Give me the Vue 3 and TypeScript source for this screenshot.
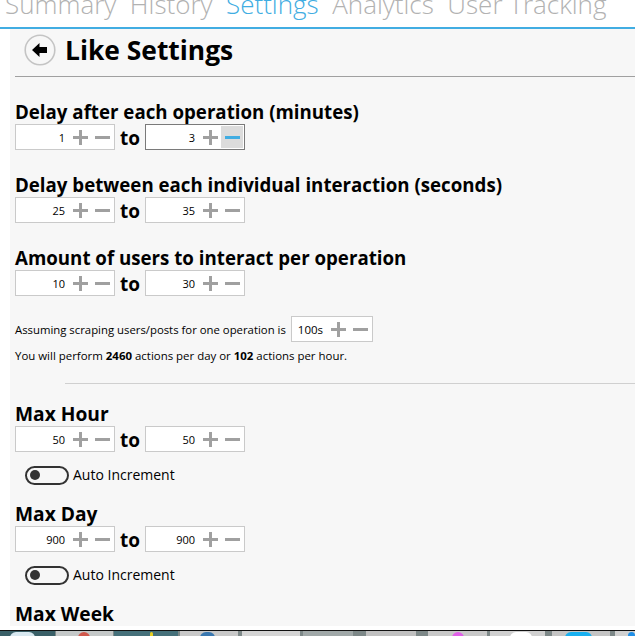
<script setup lang="ts">
interface Range {
  title: string
  from: number
  to: number
}

interface TaskButton {
  width: number
  gap: number
  color: string
  accent?: string
  left?: number
  size?: number
}

const tabs = ['Summary', 'History', 'Settings', 'Analytics', 'User Tracking']

const delays: Range[] = [
  { title: 'Delay after each operation (minutes)', from: 1, to: 3 },
  { title: 'Delay between each individual interaction (seconds)', from: 25, to: 35 },
  { title: 'Amount of users to interact per operation', from: 10, to: 30 }
]

const limits: Range[] = [
  { title: 'Max Hour', from: 50, to: 50 },
  { title: 'Max Day', from: 900, to: 900 }
]

// taskbar buttons, left to right
const taskbar: TaskButton[] = [
  { width: 55, gap: 1, color: '#3a6068', accent: '#d8e8f0', left: 10, size: 25 },
  { width: 57, gap: 1, color: '#c4c8c8', accent: '#d0584c', left: 22, size: 12 },
  { width: 64, gap: 2, color: '#45707a', accent: '#e8d020', left: 36, size: 3 },
  { width: 58, gap: 4, color: '#c8c8c8', accent: '#3a78b0', left: 20, size: 15 },
  { width: 58, gap: 3, color: '#d4d4d4' },
  { width: 50, gap: 13, color: '#a0a8a8' },
  { width: 50, gap: 12, color: '#c0c0c0' },
  { width: 59, gap: 3, color: '#c8c8c8', accent: '#e060e8', left: 24, size: 12 },
  { width: 55, gap: 7, color: '#d0d0d0', accent: '#ffffff', left: 20, size: 22 },
  { width: 58, gap: 5, color: '#c4c4c4', accent: '#18b0f0', left: 13, size: 27 },
  { width: 20, gap: 0, color: '#d0d0d0', accent: '#2090e8', left: 13, size: 7 }
]
</script>

<template>
  <div class="screen">
    <nav class="tabs">
      <span v-for="tab in tabs" :key="tab" :class="['tab', { active: tab === 'Settings' }]">{{ tab }}</span>
    </nav>

    <main class="panel">
      <header class="page-head">
        <span class="back">
          <svg width="32" height="32" viewBox="0 0 32 32">
            <circle cx="16" cy="16" r="14.8" fill="none" stroke="#c4c4c4" stroke-width="1.6" />
            <path d="M8 16 L15.5 9 V13 H23 V19 H15.5 V23 Z" fill="#000" />
          </svg>
        </span>
        <h1>Like Settings</h1>
      </header>

      <section v-for="(item, i) in delays" :key="item.title" class="block">
        <h2>{{ item.title }}</h2>
        <div class="range">
          <div class="stepper">
            <span class="value">{{ item.from }}</span>
            <span class="btn"><i /><b /></span>
            <span class="btn"><i /></span>
          </div>
          <span class="to">to</span>
          <div :class="['stepper', { focused: i === 0 }]">
            <span class="value">{{ item.to }}</span>
            <span class="btn"><i /><b /></span>
            <span :class="['btn', { hover: i === 0 }]"><i /></span>
          </div>
        </div>
      </section>

      <div class="assume">
        <span>Assuming scraping users/posts for one operation is</span>
        <div class="stepper small">
          <span class="value">100s</span>
          <span class="btn"><i /><b /></span>
          <span class="btn"><i /></span>
        </div>
      </div>
      <p class="summary">You will perform <strong>2460</strong> actions per day or <strong>102</strong> actions per hour.</p>

      <hr class="divider" />

      <section v-for="item in limits" :key="item.title" class="limit">
        <h2>{{ item.title }}</h2>
        <div class="range">
          <div class="stepper">
            <span class="value">{{ item.from }}</span>
            <span class="btn"><i /><b /></span>
            <span class="btn"><i /></span>
          </div>
          <span class="to">to</span>
          <div class="stepper">
            <span class="value">{{ item.to }}</span>
            <span class="btn"><i /><b /></span>
            <span class="btn"><i /></span>
          </div>
        </div>
        <div class="auto">
          <span class="toggle"><em /></span>
          <span>Auto Increment</span>
        </div>
      </section>

      <h2>Max Week</h2>
    </main>

    <footer class="taskbar">
      <span
        v-for="(b, i) in taskbar"
        :key="i"
        class="task"
        :style="{ width: b.width + 'px', marginRight: b.gap + 'px', background: b.color }"
      >
        <u v-if="b.accent" :style="{ left: b.left + 'px', width: b.size + 'px', background: b.accent }" />
      </span>
    </footer>
  </div>
</template>

<style>
html,
body {
  margin: 0;
  background: #fff;
  overflow: hidden;
}
</style>

<style scoped>
.screen {
  width: 635px;
  height: 636px;
  display: flex;
  flex-direction: column;
  overflow: hidden;
  font-family: "Open Sans", "Noto Sans", sans-serif;
  color: #000;
}

.tabs {
  height: 27px;
  flex: none;
  display: flex;
  align-items: flex-end;
  gap: 13.5px;
  padding-left: 5px;
  border-bottom: 2px solid #41ade2;
  overflow: hidden;
}

.tab {
  font-size: 26px;
  font-weight: 300;
  line-height: 34px;
  margin-bottom: 6px;
  color: #b2b2b2;
  white-space: nowrap;
}

.tab.active {
  color: #41ade2;
}

.panel {
  flex: 1;
  min-height: 0;
  margin: 0 0 4px 10px;
  padding: 0 0 0 5px;
  background: #f7f7f7;
  overflow: hidden;
}

.page-head {
  height: 47px;
  box-sizing: content-box;
  display: flex;
  align-items: center;
  gap: 9px;
  padding-left: 9px;
  border-bottom: 1px solid #a0a0a0;
  margin-bottom: 23px;
}

.back {
  display: flex;
  margin-bottom: 5px;
}

h1 {
  margin: 0 0 5px;
  font-size: 26.4px;
  line-height: 34px;
  font-weight: 700;
}

h2 {
  margin: 0;
  font-size: 18.7px;
  line-height: 24px;
  font-weight: 700;
  white-space: nowrap;
}

.limit h2,
.panel > h2 {
  font-size: 19.2px;
}

.block {
  margin-bottom: 23px;
}

.range {
  display: flex;
  align-items: center;
  gap: 5px;
}

.to {
  width: 20px;
  font-size: 19px;
  font-weight: 700;
  line-height: 24px;
  text-align: center;
  padding-top: 2px;
}

.stepper {
  width: 100px;
  height: 26px;
  box-sizing: border-box;
  display: flex;
  align-items: center;
  justify-content: flex-end;
  background: #fff;
  border: 1px solid #cacaca;
  padding-right: 1px;
}

.stepper.focused {
  border-color: #7a7a7a;
}

.value {
  flex: 1;
  text-align: right;
  font-size: 11px;
  padding-right: 4px;
}

.btn {
  position: relative;
  width: 22px;
  height: 22px;
  flex: none;
}

.btn i,
.btn b {
  position: absolute;
  background: #a0a0a0;
}

.btn i {
  left: 4px;
  top: 10px;
  width: 15px;
  height: 3px;
}

.btn b {
  left: 10px;
  top: 4px;
  width: 3px;
  height: 15px;
}

.btn.hover {
  background: #dcdcdc;
}

.btn.hover i {
  background: #41ade2;
}

.assume {
  display: flex;
  align-items: center;
  gap: 5px;
  margin-top: -3px;
  font-size: 11.35px;
}

.stepper.small {
  width: 82px;
}

.stepper.small .value {
  flex: 1;
  padding: 0 0 0 6px;
  text-align: left;
  font-size: 11.5px;
}

.summary {
  margin: 5px 0 0;
  font-size: 11.45px;
  line-height: 18px;
}

.divider {
  margin: 18px 0 18px 50px;
  border: none;
  border-top: 1px solid #d0d0d0;
}

.limit {
  margin-bottom: 15px;
}

.auto {
  display: flex;
  align-items: center;
  gap: 4px;
  margin: 11px 0 0 10px;
  font-size: 14px;
  line-height: 24px;
}

.toggle {
  width: 44px;
  height: 19px;
  box-sizing: border-box;
  border: 2px solid #333;
  border-radius: 10px;
  display: flex;
  align-items: center;
  padding-left: 3px;
}

.toggle em {
  width: 10px;
  height: 10px;
  border-radius: 50%;
  background: #333;
}

.taskbar {
  height: 6px;
  flex: none;
  display: flex;
  background: #7d8888;
  border-top: 1px solid #111;
  box-sizing: border-box;
}

.task {
  position: relative;
  flex: none;
  display: block;
  overflow: hidden;
}

.task u {
  position: absolute;
  top: 1px;
  height: 6px;
  border-radius: 6px 6px 0 0;
}
</style>
